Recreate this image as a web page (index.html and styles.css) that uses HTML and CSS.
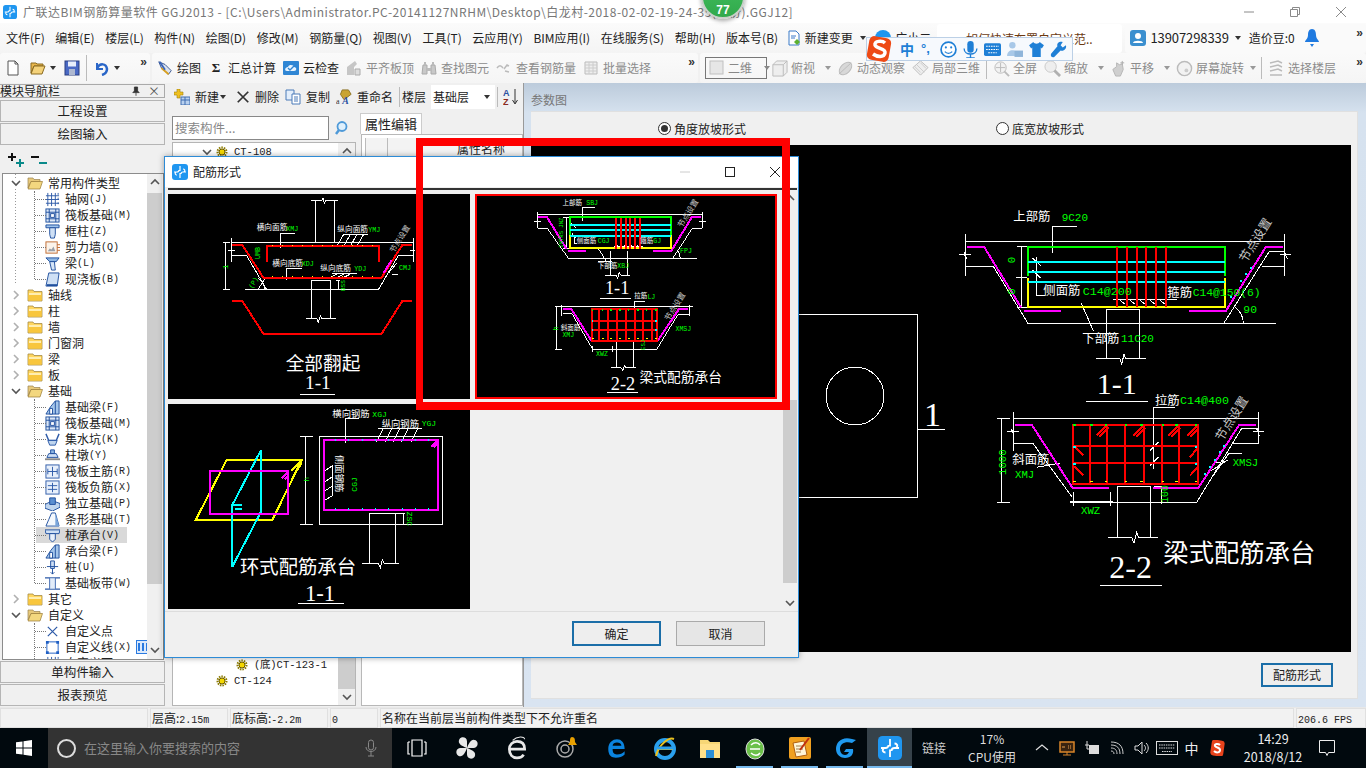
FILE: index.html
```html
<!DOCTYPE html>
<html lang="zh-CN">
<head>
<meta charset="utf-8">
<title>广联达BIM钢筋算量软件 GGJ2013</title>
<link rel="stylesheet" href="styles.css">
</head>
<body>
<svg class="defs" aria-hidden="true">
  <symbol id="fo" viewBox="0 0 16 16"><path d="M1 3h5l1 1.5h6v2H4L1 13z" fill="#e8c97a" stroke="#9a8350" stroke-width=".7"/><path d="M4 6.5h11.5L13 14H1z" fill="#f3d77f" stroke="#9a7a35" stroke-width=".7"/></symbol>
  <symbol id="fc" viewBox="0 0 16 16"><path d="M1 3h5l1 1.5h8V14H1z" fill="#ffd65e" stroke="#a58a45" stroke-width=".8"/><path d="M1.5 6h13v7.5h-13z" fill="#f8c63d"/><path d="M2 6h12v2H2z" fill="#ffeeb0"/></symbol>
  <symbol id="cd" viewBox="0 0 10 10"><path d="M1 3l4 4 4-4" fill="none" stroke="#555" stroke-width="1.6"/></symbol>
  <symbol id="cr" viewBox="0 0 10 10"><path d="M3 1l4 4-4 4" fill="none" stroke="#b0b0b0" stroke-width="1.6"/></symbol>
  <symbol id="grid" viewBox="0 0 16 16"><path d="M3 1v14M7 1v14M11 1v14M1 4h14M1 8h14M1 12h14" stroke="#2d5aa8" fill="none"/><path d="M14 1v2M14 6v2M14 11v2" stroke="#2d5aa8"/></symbol>
  <symbol id="raft" viewBox="0 0 16 16"><rect x="1" y="1" width="14" height="14" fill="#dbe7f7" stroke="#1f4f9e"/><path d="M1 4.5h14M1 11.500h14M4.500 1v14M11.500 1v14" stroke="#1f4f9e" fill="none"/><rect x="6" y="6" width="4" height="4" fill="#fff" stroke="#1f4f9e"/></symbol>
  <symbol id="col" viewBox="0 0 16 16"><path d="M1 1h14v3H1z" fill="#9fc4ec" stroke="#1f4f9e"/><path d="M5 4h6v7l-1 4H6l-1-4z" fill="#cfe0f5" stroke="#1f4f9e"/></symbol>
  <symbol id="wall" viewBox="0 0 16 16"><rect x="1" y="2" width="12" height="12" fill="#fbf3ea" stroke="#c06a30"/><path d="M3 12l2-3 2 1 2-3 2 5z" fill="#9aa0a8"/><path d="M13 5h3M13 8h3M13 11h3" stroke="#c06a30"/></symbol>
  <symbol id="lbeam" viewBox="0 0 16 16"><path d="M1 2h14l-3 4H5z" fill="#8fb7e3" stroke="#1f4f9e"/><path d="M5 6h5l1 9H7z" fill="#d5e5f7" stroke="#1f4f9e"/></symbol>
  <symbol id="slab" viewBox="0 0 16 16"><path d="M4 1h11l-2 14H1z" fill="#cfe0f5" stroke="#1f4f9e"/><path d="M2 14h11" stroke="#1f4f9e" stroke-width="2"/></symbol>
  <symbol id="fbeam" viewBox="0 0 16 16"><path d="M1 15l5-8 5-6h4v14z" fill="#a4c5ea" stroke="#1f4f9e"/><path d="M5 15V9h3v6z" fill="#fff" stroke="#1f4f9e"/><path d="M11 1v14" stroke="#1f4f9e"/></symbol>
  <symbol id="pit" viewBox="0 0 16 16"><path d="M1 2l3 7h8l3-7" fill="none" stroke="#2d5aa8" stroke-width="1.5"/><path d="M3 9h10l-2 5H5z" fill="#bfd5ee" stroke="#2d5aa8"/></symbol>
  <symbol id="pier" viewBox="0 0 16 16"><path d="M6 2h4v4H6z" fill="#8fb7e3" stroke="#1f4f9e"/><path d="M4 6h8l2 4H2z" fill="#cfe0f5" stroke="#1f4f9e"/><path d="M0 12h16" stroke="#8a8a8a" stroke-width="2"/></symbol>
  <symbol id="zmain" viewBox="0 0 16 16"><rect x="1" y="1" width="14" height="14" fill="#e8f0fb" stroke="#2d5aa8"/><path d="M8 3v10M3 8h10M3 5v6M13 5v6" stroke="#2d5aa8" fill="none"/></symbol>
  <symbol id="zneg" viewBox="0 0 16 16"><rect x="1" y="1" width="14" height="14" fill="#e8f0fb" stroke="#2d5aa8"/><path d="M8 3v10M3 6h10M3 10h10" stroke="#2d5aa8" fill="none"/></symbol>
  <symbol id="iso" viewBox="0 0 16 16"><path d="M0 9l8-4 8 3v4l-8 4-8-3z" fill="#bfd5ee" stroke="#1f4f9e"/><path d="M5 2h6v7H5z" fill="#5b8fd0" stroke="#1f4f9e"/></symbol>
  <symbol id="strip" viewBox="0 0 16 16"><path d="M1 15l3-7 3-7h4l2 7 2 7z" fill="#f4f8fd" stroke="#1f4f9e"/><path d="M11 1l2 7 2 7h-4z" fill="#7aa5da"/></symbol>
  <symbol id="cap" viewBox="0 0 16 16"><path d="M0 2h16l-1 4H1z" fill="#cfe0f5" stroke="#1f4f9e"/><path d="M5 6h6v6l-3 3-3-3z" fill="#e8f0fb" stroke="#1f4f9e"/></symbol>
  <symbol id="pile" viewBox="0 0 16 16"><path d="M6 1h4v8H6z" fill="#cfe0f5" stroke="#1f4f9e"/><path d="M2 7h12M8 9v6l-2-2M8 15l2-2" stroke="#1f4f9e" fill="none"/></symbol>
  <symbol id="band" viewBox="0 0 16 16"><path d="M0 2h16M0 14h16M5 2v12M11 2v12" stroke="#2d5aa8" fill="none" stroke-width="1.2"/><path d="M5 2h6v12H5z" fill="#cfe0f5" opacity=".6"/></symbol>
  <symbol id="pt" viewBox="0 0 16 16"><path d="M3 3l10 10M13 3L3 13" stroke="#2d5aa8" stroke-width="1.3"/></symbol>
  <symbol id="lin" viewBox="0 0 16 16"><rect x="2" y="2" width="12" height="12" fill="none" stroke="#1f5fc4"/><path d="M1 1h3v3H1zM12 1h3v3h-3zM1 12h3v3H1zM12 12h3v3h-3z" fill="#1f5fc4"/></symbol>
  <symbol id="gear" viewBox="0 0 12 12"><circle cx="6" cy="6" r="4.500" fill="none" stroke="#8a7a00" stroke-width="2" stroke-dasharray="1.500 1"/><circle cx="6" cy="6" r="3" fill="#f5d800" stroke="#6a5a00"/></symbol>
  <symbol id="new" viewBox="0 0 16 16"><path d="M3 1h7l3 3v11H3z" fill="#fff" stroke="#555"/><path d="M10 1v3h3" fill="none" stroke="#555"/></symbol>
  <symbol id="open" viewBox="0 0 16 16"><path d="M1 3h5l1 1h6v2H4L1 13z" fill="#e8b64c" stroke="#8a6a20"/><path d="M4 6h11l-3 8H1z" fill="#f4d27a" stroke="#8a6a20"/></symbol>
  <symbol id="save" viewBox="0 0 16 16"><rect x="1" y="1" width="14" height="14" fill="#4a69c4" stroke="#2a3f80"/><rect x="4" y="1.500" width="8" height="5" fill="#e8eefb"/><rect x="5" y="9" width="6" height="6" fill="#aeb8d0"/></symbol>
  <symbol id="undo" viewBox="0 0 16 16"><path d="M3 3v6h6" fill="none" stroke="#2a66c8" stroke-width="2"/><path d="M3 8c3-5 9-5 10 1 0 3-2 5-5 6" fill="none" stroke="#2a66c8" stroke-width="2.500"/></symbol>
  <symbol id="draw" viewBox="0 0 18 18"><path d="M2 2l7 3 7 7-3 4-8-7z" fill="#dbe3f0" stroke="#2b4a88"/><path d="M5 9l8 7" stroke="#d8a020" stroke-width="2"/><path d="M3 2l6 9" stroke="#3a64b8" stroke-width="2"/></symbol>
  <symbol id="cloud" viewBox="0 0 16 16"><rect x="0" y="1" width="16" height="14" rx="1" fill="#2f86d4"/><path d="M4 11c-3 0-2-4 1-4 1-3 6-2 6 0 3 0 3 4 0 4z" fill="#e8f4ff"/><path d="M5 8l2 2 4-4" stroke="#2f86d4" fill="none" stroke-width="1.400"/></symbol>
  <symbol id="g1" viewBox="0 0 16 16"><path d="M1 15V7l8-6 2 3-3 3v8z" fill="#c6c6c6"/><path d="M9 9h5v6H9z" fill="#ddd" stroke="#aaa"/></symbol>
  <symbol id="g2" viewBox="0 0 16 16"><path d="M2 5h4v9H1zM10 5h4l1 9h-5z" fill="#c8c8c8" stroke="#aaa"/><path d="M6 8h4v3H6zM3 2h2v3H3zM11 2h2v3h-2z" fill="#bbb"/></symbol>
  <symbol id="g3" viewBox="0 0 16 16"><path d="M1 8c2-3 4-3 6 0M8 9l3-4 2 1M9 11l4 1" fill="none" stroke="#bbb" stroke-width="1.500"/></symbol>
  <symbol id="g4" viewBox="0 0 16 16"><path d="M2 2h12v12H2z" fill="#eee" stroke="#bbb"/><path d="M2 5h12M2 8h12M2 11h12M6 2v12M10 2v12" stroke="#ccc"/></symbol>
  <symbol id="g5" viewBox="0 0 16 16"><rect x="1" y="1" width="13" height="13" fill="#e6e6e6" stroke="#c0c0c0"/></symbol>
  <symbol id="g6" viewBox="0 0 18 18"><path d="M2 5l4-4h11v12l-4 4H2zM2 5h11v12M13 5l4-4" fill="#eee" stroke="#bbb"/></symbol>
  <symbol id="g7" viewBox="0 0 18 18"><ellipse cx="9" cy="9" rx="5" ry="8" transform="rotate(45 9 9)" fill="#d8d8d8" stroke="#bbb"/><path d="M2 15L15 3" stroke="#bbb"/></symbol>
  <symbol id="g8" viewBox="0 0 18 18"><path d="M9 1l8 7-8 8-8-8z" fill="#eee" stroke="#bbb"/><path d="M5 5l8 8M9 3l6 6M3 7l6 6" stroke="#ccc"/></symbol>
  <symbol id="g9" viewBox="0 0 18 18"><circle cx="8" cy="8" r="6" fill="#f2f2f2" stroke="#bbb"/><path d="M8 3v10M3 8h10" stroke="#bbb"/><path d="M12 12l5 5" stroke="#bbb" stroke-width="2"/></symbol>
  <symbol id="g10" viewBox="0 0 18 18"><circle cx="7" cy="7" r="6" fill="#eee" stroke="#c8c8c8"/><path d="M11 11l6 6" stroke="#b0b0b0" stroke-width="3"/></symbol>
  <symbol id="g11" viewBox="0 0 18 18"><path d="M6 17l-3-7 4-3V3l3 2 3-1 1 6-3 7z" fill="#cfcfcf" stroke="#b5b5b5"/><path d="M13 1v4M11 3h4" stroke="#aaa"/></symbol>
  <symbol id="g12" viewBox="0 0 18 18"><circle cx="9" cy="9" r="7.500" fill="#f2f2f2" stroke="#bbb" stroke-width="1.500"/><circle cx="11" cy="11" r="2" fill="#ccc"/><path d="M3 13l3 3" stroke="#bbb"/></symbol>
  <symbol id="g13" viewBox="0 0 16 16"><path d="M2 3l8-2 4 2M2 7l8-2 4 2M2 11l8-2 4 2M2 15h12" fill="none" stroke="#bbb" stroke-width="1.400"/></symbol>
  <symbol id="nw" viewBox="0 0 16 16"><rect x="7" y="8" width="9" height="8" fill="#b8d0ee" stroke="#3f6db0"/><path d="M7 11h9M11 8v8" stroke="#3f6db0"/><path d="M3 0h3v3h3v3H6v3H3V6H0V3h3z" fill="#f0c020" stroke="#a08010" stroke-width=".6"/></symbol>
  <symbol id="del" viewBox="0 0 16 16"><path d="M2 2l12 12M14 2L2 14" stroke="#333" stroke-width="2"/></symbol>
  <symbol id="cp" viewBox="0 0 16 16"><path d="M1 1h8v10H1z" fill="#e3eefb" stroke="#4a7ab8"/><path d="M7 5h8v10H7z" fill="#fff" stroke="#4a7ab8"/><path d="M9 8h4M9 10h4M9 12h4" stroke="#4a7ab8"/></symbol>
  <symbol id="rn" viewBox="0 0 18 18"><path d="M7 1h7l3 5-8 6-4-6z" fill="#c9a432" stroke="#8a7020"/><text x="0" y="17" class="rn-a">a</text><text x="7" y="17" class="rn-b">A</text></symbol>
  <symbol id="sr" viewBox="0 0 16 16"><circle cx="8" cy="6.500" r="4.500" fill="#dff0fc" stroke="#4f9ad8" stroke-width="1.800"/><path d="M5 10l-3 4" stroke="#4f9ad8" stroke-width="2.500"/></symbol>
  <symbol id="lg" viewBox="0 0 16 16"><rect width="16" height="16" rx="3" fill="#1f96f0"/><path d="M8 2v5M8 9v5M2 8h3c1 0 2-.5 2-2M14 8h-3c-1 0-2 .5-2 2M4 8c-2 2 0 3 1 3M12 8c2-2 0-3-1-3" stroke="#fff" stroke-width="1.200" fill="none"/></symbol>
</svg>

<div class="screen">
  <header class="title">
    <svg class="t-ico"><use href="#lg"/></svg>
    <span class="t-text">广联达BIM钢筋算量软件 GGJ2013 - [C:\Users\Administrator.PC-20141127NRHM\Desktop\白龙村-2018-02-02-19-24-35(备份).GGJ12]</span>
    <div class="winbtns">
      <svg class="wb" viewBox="0 0 12 12"><path d="M1 6h10" stroke="#8a8a8a"/></svg>
      <svg class="wb" viewBox="0 0 12 12"><path d="M1.500 3.500h7v7h-7zM3.500 3.500v-2h7v7h-2" fill="none" stroke="#8a8a8a"/></svg>
      <svg class="wb" viewBox="0 0 12 12"><path d="M1 1l10 10M11 1L1 11" stroke="#8a8a8a"/></svg>
    </div>
  </header>

  <nav class="menu">
    <span>文件(F)</span><span>编辑(E)</span><span>楼层(L)</span><span>构件(N)</span><span>绘图(D)</span><span>修改(M)</span><span>钢筋量(Q)</span><span>视图(V)</span><span>工具(T)</span><span>云应用(Y)</span><span>BIM应用(I)</span><span>在线服务(S)</span><span>帮助(H)</span><span>版本号(B)</span>
    <span class="m-chg"><svg class="ic16" viewBox="0 0 16 16"><path d="M3 1h7l3 3v11H3z" fill="#fff" stroke="#3a7ac8"/><path d="M5 6h5M5 8h4" stroke="#3a7ac8"/><path d="M11 9l3 3-3 3-3-3z" fill="#5cb030"/></svg>新建变更<i class="dd"></i></span>
    <span class="m-xiao"><svg class="ic16" viewBox="0 0 16 16"><circle cx="8" cy="8" r="8" fill="#1f96f0"/></svg>广小二</span>
    <span class="m-news">如何快速布置自定义范..</span>
    <span class="m-acct">
      <svg class="ic16" viewBox="0 0 16 16"><rect width="16" height="16" rx="3" fill="#3b8fcf"/><circle cx="8" cy="6" r="3" fill="#fff"/><path d="M3 13c0-3 10-3 10 0z" fill="#fff"/></svg>
      <span class="num">13907298339</span><i class="dd"></i><span class="bean">造价豆:0</span>
      <svg class="bell" viewBox="0 0 14 18"><path d="M7 0c3 0 4 3 4 6 0 4 3 5 3 7H0c0-2 3-3 3-7 0-3 1-6 4-6zM5 15h4l-2 3z" fill="#1f7ae0"/></svg>
      <span class="more">»</span>
    </span>
  </nav>

  <div class="tools">
    <div class="seg seg1">
      <svg class="ic16"><use href="#new"/></svg>
      <svg class="ic16 ml5"><use href="#open"/></svg><i class="dd"></i>
      <svg class="ic16 ml4"><use href="#save"/></svg>
      <i class="vsep"></i>
      <svg class="ic16"><use href="#undo"/></svg><i class="dd"></i>
      <span class="more auto">»</span>
    </div>
    <div class="seg seg2">
      <span class="tb"><svg class="ic16"><use href="#draw"/></svg>绘图</span>
      <span class="tb"><b class="sig">Σ</b>汇总计算</span>
      <span class="tb"><svg class="ic16"><use href="#cloud"/></svg>云检查</span>
      <span class="tb off"><svg class="ic16"><use href="#g1"/></svg>平齐板顶</span>
      <span class="tb off"><svg class="ic16"><use href="#g2"/></svg>查找图元</span>
      <span class="tb off"><svg class="ic16"><use href="#g3"/></svg>查看钢筋量</span>
      <span class="tb off"><svg class="ic16"><use href="#g4"/></svg>批量选择</span>
      <span class="more auto">»</span>
    </div>
    <div class="seg seg3">
      <span class="combo"><svg class="ic16"><use href="#g5"/></svg>二维<i class="dd"></i></span>
      <span class="tb off t3"><svg class="ic17"><use href="#g6"/></svg>俯视<i class="dd lt"></i></span>
      <span class="tb off t3"><svg class="ic17"><use href="#g7"/></svg>动态观察</span>
      <span class="tb off t3"><svg class="ic17"><use href="#g8"/></svg>局部三维</span>
      <i class="vsep2"></i>
      <span class="tb off t3"><svg class="ic17"><use href="#g9"/></svg>全屏</span>
      <span class="tb off t3"><svg class="ic17"><use href="#g10"/></svg>缩放<i class="dd lt"></i></span>
      <span class="tb off t3"><svg class="ic17"><use href="#g11"/></svg>平移<i class="dd lt"></i></span>
      <span class="tb off t3"><svg class="ic17"><use href="#g12"/></svg>屏幕旋转<i class="dd lt tight"></i></span>
      <i class="vsep2"></i>
      <span class="tb off"><svg class="ic16"><use href="#g13"/></svg>选择楼层</span>
      <span class="more auto">»</span>
    </div>
  </div>

  <main class="work">
    <aside class="nav">
      <div class="nav-h"><span>模块导航栏</span><span class="nav-x"><svg class="pin" viewBox="0 0 10 12"><path d="M3 1h4v5l2 2H1l2-2zM5 8v4" fill="#333" stroke="#333"/></svg><span>×</span></span></div>
      <div class="nav-btn">工程设置</div>
      <div class="nav-btn">绘图输入</div>
      <div class="nav-tools">
        <svg class="pm" viewBox="0 0 18 16"><path d="M1 5h8M5 1v8" stroke="#111" stroke-width="2"/><path d="M9 11h8M13 7v8" stroke="#0a8a8a" stroke-width="2"/></svg>
        <svg class="pm" viewBox="0 0 18 16"><path d="M1 5h8" stroke="#111" stroke-width="2"/><path d="M9 11h8" stroke="#0a8a8a" stroke-width="2"/></svg>
      </div>
      <div class="tree">
        <div class="tree-list">
          <div class="r0"><svg class="ch"><use href="#cd"/></svg><svg class="fd"><use href="#fo"/></svg>常用构件类型</div>
          <div class="kids">
            <div class="r1"><svg class="ti"><use href="#grid"/></svg>轴网<span class="k">(J)</span></div>
            <div class="r1"><svg class="ti"><use href="#raft"/></svg>筏板基础<span class="k">(M)</span></div>
            <div class="r1"><svg class="ti"><use href="#col"/></svg>框柱<span class="k">(Z)</span></div>
            <div class="r1"><svg class="ti"><use href="#wall"/></svg>剪力墙<span class="k">(Q)</span></div>
            <div class="r1"><svg class="ti"><use href="#lbeam"/></svg>梁<span class="k">(L)</span></div>
            <div class="r1"><svg class="ti"><use href="#slab"/></svg>现浇板<span class="k">(B)</span></div>
          </div>
          <div class="r0"><svg class="ch"><use href="#cr"/></svg><svg class="fd"><use href="#fc"/></svg>轴线</div>
          <div class="r0"><svg class="ch"><use href="#cr"/></svg><svg class="fd"><use href="#fc"/></svg>柱</div>
          <div class="r0"><svg class="ch"><use href="#cr"/></svg><svg class="fd"><use href="#fc"/></svg>墙</div>
          <div class="r0"><svg class="ch"><use href="#cr"/></svg><svg class="fd"><use href="#fc"/></svg>门窗洞</div>
          <div class="r0"><svg class="ch"><use href="#cr"/></svg><svg class="fd"><use href="#fc"/></svg>梁</div>
          <div class="r0"><svg class="ch"><use href="#cr"/></svg><svg class="fd"><use href="#fc"/></svg>板</div>
          <div class="r0"><svg class="ch"><use href="#cd"/></svg><svg class="fd"><use href="#fo"/></svg>基础</div>
          <div class="kids">
            <div class="r1"><svg class="ti"><use href="#fbeam"/></svg>基础梁<span class="k">(F)</span></div>
            <div class="r1"><svg class="ti"><use href="#raft"/></svg>筏板基础<span class="k">(M)</span></div>
            <div class="r1"><svg class="ti"><use href="#pit"/></svg>集水坑<span class="k">(K)</span></div>
            <div class="r1"><svg class="ti"><use href="#pier"/></svg>柱墩<span class="k">(Y)</span></div>
            <div class="r1"><svg class="ti"><use href="#zmain"/></svg>筏板主筋<span class="k">(R)</span></div>
            <div class="r1"><svg class="ti"><use href="#zneg"/></svg>筏板负筋<span class="k">(X)</span></div>
            <div class="r1"><svg class="ti"><use href="#iso"/></svg>独立基础<span class="k">(P)</span></div>
            <div class="r1"><svg class="ti"><use href="#strip"/></svg>条形基础<span class="k">(T)</span></div>
            <div class="r1 hi"><svg class="ti"><use href="#cap"/></svg>桩承台<span class="k">(V)</span></div>
            <div class="r1"><svg class="ti"><use href="#fbeam"/></svg>承台梁<span class="k">(F)</span></div>
            <div class="r1"><svg class="ti"><use href="#pile"/></svg>桩<span class="k">(U)</span></div>
            <div class="r1"><svg class="ti"><use href="#band"/></svg>基础板带<span class="k">(W)</span></div>
          </div>
          <div class="r0"><svg class="ch"><use href="#cr"/></svg><svg class="fd"><use href="#fc"/></svg>其它</div>
          <div class="r0"><svg class="ch"><use href="#cd"/></svg><svg class="fd"><use href="#fo"/></svg>自定义</div>
          <div class="kids">
            <div class="r1"><svg class="ti"><use href="#pt"/></svg>自定义点</div>
            <div class="r1"><svg class="ti"><use href="#lin"/></svg>自定义线<span class="k">(X)</span><svg class="mini" viewBox="0 0 14 14"><rect x=".5" y=".5" width="13" height="13" fill="#dbe9fb" stroke="#2a7ae0"/><path d="M3 3v8M7 3v8M11 3v8" stroke="#2a7ae0" stroke-width="2"/></svg></div>
            <div class="r1"><svg class="ti"><use href="#grid"/></svg>自定义面</div>
          </div>
        </div>
        <div class="vs vs-nav"><svg class="ua" viewBox="0 0 10 10"><path d="M1 7l4-4 4 4" fill="none" stroke="#555" stroke-width="1.600"/></svg><i class="vs-thumb"></i><svg class="ua" viewBox="0 0 10 10"><path d="M1 3l4 4 4-4" fill="none" stroke="#555" stroke-width="1.600"/></svg></div>
      </div>
      <div class="nav-btn b2">单构件输入</div>
      <div class="nav-btn b2">报表预览</div>
    </aside>

    <section class="mid">
      <div class="mid-tb">
        <svg class="ic16"><use href="#nw"/></svg><span class="mt">新建</span><i class="dd"></i>
        <svg class="ic14"><use href="#del"/></svg><span class="mt">删除</span>
        <svg class="ic16 gp"><use href="#cp"/></svg><span class="mt">复制</span>
        <svg class="ic16 gp"><use href="#rn"/></svg><span class="mt">重命名</span>
        <i class="vsep3"></i><span>楼层</span>
        <span class="sel-floor"><span>基础层</span><i class="dd"></i></span>
        <i class="vsep3"></i>
        <svg class="az" viewBox="0 0 16 18"><text x="0" y="8" class="az-a">A</text><text x="0" y="17" class="az-z">Z</text><path d="M12 1v14M9.500 12l2.500 4 2.500-4" fill="none" stroke="#333"/></svg>
      </div>
      <div class="mid-body">
        <div class="mid-left">
          <div class="search"><span class="search-in">搜索构件...</span><svg class="ic16 sr"><use href="#sr"/></svg></div>
          <div class="list">
            <div class="list-rows">
              <div class="li first"><svg class="ch"><use href="#cd"/></svg><svg class="gr"><use href="#gear"/></svg>CT-108</div>
              <div class="grow"></div>
              <div class="li deep"><svg class="gr"><use href="#gear"/></svg>(底)CT-123-1</div>
              <div class="li shal"><svg class="gr"><use href="#gear"/></svg>CT-124</div>
              <div class="li blank"></div>
            </div>
            <div class="vs vs-list"><svg class="ua" viewBox="0 0 10 10"><path d="M1 7l4-4 4 4" fill="none" stroke="#555" stroke-width="1.600"/></svg><i class="vs-thumb"></i><svg class="ua" viewBox="0 0 10 10"><path d="M1 3l4 4 4-4" fill="none" stroke="#555" stroke-width="1.600"/></svg></div>
          </div>
        </div>
        <div class="mid-right">
          <div class="tab">属性编辑</div>
          <div class="prop"><div class="prop-h"><i class="ph1"></i><i class="ph2"></i><span class="ph3">属性名称</span></div></div>
        </div>
      </div>
    </section>

    <section class="param">
      <div class="param-h">参数图</div>
      <div class="param-p">
        <div class="radios">
          <span class="radio on"><i class="dot"></i>角度放坡形式</span>
          <span class="radio"><i class="dot"></i>底宽放坡形式</span>
        </div>
        <svg class="canvas" viewBox="531 146 820 507">
          <path class="ln w" d="M799 315H917V498H799M917 430H945"/>
          <circle class="ln w" cx="855" cy="397" r="29"/>
          <text x="924" y="427" class="f-s big1">1</text>
          <g transform="translate(950 195) scale(.33333)">
            <path class="ln w" d="M46 142H1005M46 120V245M1005 120V245M28 183H48L42 175 50 195 44 183H64M990 183H1010L1004 175 1012 195 1006 183H1022M46 217H130L235 390H977M820 390L958 172H1005M935 217H1005M215 158V340M200 158H232M198 250H232M200 340H232M307 178V97H380M247 192L272 215M247 228L272 252M260 190V305H285M490 318H680M505 315L525 330M535 315L555 330M565 315L585 330M595 315L615 330M625 315L645 330M393 326L430 410M400 420H505M469 495V347H568V495M438 495H510L515 512 522 480 527 495H587M880 390A60 60 0 0 0 855 340"/>
            <path class="ln m" d="M52 158H102L213 340M222 350H332M718 350H828L948 158H1000"/>
            <path class="ln gr1" d="M234 245V158H825V245"/>
            <path class="ln y" d="M234 252V339H825V252"/>
            <path class="ln c" d="M234 203H825M234 233H825M234 264H825"/>
            <path class="ln r" d="M500 158V339M530 158V339M560 158V339M587 158V339M618 158V339M648 158V339"/>
            <path class="ln cd" d="M840 310h6M870 262h6M885 240h6M899 222h6"/>
            <text x="190" y="82" class="cn" font-size="37">上部筋</text><text x="335" y="80" class="lt-g" font-size="33">9C20</text>
            <text x="280" y="302" class="cn" font-size="37">侧面筋</text><text x="398" y="302" class="lt-g" font-size="35">C14@200</text>
            <text x="652" y="308" class="cn" font-size="37">箍筋</text><text x="728" y="306" class="lt-g" font-size="34">C14@150(6)</text>
            <text x="397" y="447" class="cn" font-size="37">下部筋</text><text x="513" y="445" class="lt-g" font-size="33">11C20</text>
            <text x="880" y="358" class="lt-g" font-size="34">90</text>
            <text x="196" y="208" class="lt-g" font-size="32" transform="rotate(-90 196 208)">0</text>
            <text x="196" y="302" class="lt-g" font-size="32" transform="rotate(-90 196 302)">0</text>
            <text x="888" y="208" class="cn gy" font-size="37" transform="rotate(-58 888 208)">节点设置</text>
            <text x="440" y="600" class="f-s" font-size="90">1-1</text>
            <path class="ln w" d="M408 622H594"/>
          </g>
          <g transform="translate(980 390) scale(.33333)">
            <path class="ln w" d="M100 90H835M100 70V185M835 70V165M52 90H90M65 90V340M52 340H90M82 128H100L94 120 102 140 98 128H118M818 128H836L830 120 838 140 834 128H852M100 165H160L277 325M270 340H650L785 118H835M760 165H835M522 55H585M522 55V240M510 185L535 160M510 230L535 205M170 235L240 222M412 445V292H512V445M385 445H455L462 462 470 430 475 445H535M545 297V345M522 292H545M700 260L745 195H785M694 245L740 215M705 222L745 215M280 310V350M393 310V350M270 338H398"/>
            <path class="ln m" d="M105 107H155L278 297H388M520 297H655L778 107H828"/>
            <path class="ln r2" d="M278 107H655V285H278ZM330 107V285M382 107V285M435 107V285M492 107V285M545 107V285M598 107V285M278 170H655M278 222H655M350 140L380 110M358 143L386 115M460 140L490 110M468 143L496 115M565 140L595 110M573 143L601 115M622 140L652 110M630 143L655 118M282 232L310 260M282 172L310 200M630 205L652 178M630 260L652 235"/>
            <path class="ln gd" d="M280 109h7M331 109h7M374 109h7M435 109h7M481 109h7M546 109h7M586 109h7M644 109h7"/>
            <path class="ln yd" d="M280 277h7M331 277h7M374 277h7M435 277h7M481 277h7M546 277h7M586 277h7M644 277h7"/>
            <path class="ln cd" d="M280 175h7M644 175h7M280 226h7M644 226h7M730 170h6M716 190h6M702 212h6M688 235h6M673 256h6"/>
            <text x="525" y="48" class="cn" font-size="37">拉筋</text><text x="600" y="46" class="lt-g" font-size="35">C14@400</text>
            <text x="97" y="225" class="cn" font-size="37">斜面筋</text><text x="105" y="268" class="lt-g" font-size="32">XMJ</text>
            <text x="303" y="375" class="lt-g" font-size="32">XWZ</text><text x="758" y="232" class="lt-g" font-size="32">XMSJ</text>
            <text x="77" y="258" class="lt-g" font-size="32" transform="rotate(-90 77 258)">1000</text>
            <text x="563" y="342" class="lt-g" font-size="30" transform="rotate(-90 563 342)">100</text>
            <text x="727" y="158" class="cn gy" font-size="37" transform="rotate(-58 727 158)">节点设置</text>
            <text x="550" y="520" class="cn" font-size="76">梁式配筋承台</text>
            <text x="388" y="568" class="f-s" font-size="96">2-2</text>
            <path class="ln w" d="M360 590H546"/>
          </g>
        </svg>
        <div class="param-f"><span class="blue-btn">配筋形式</span></div>
      </div>
    </section>
  </main>

  <footer class="status">
    <span class="st s1"></span>
    <span class="st s2">层高:<span class="k2">2.15m</span></span>
    <span class="st s3">底标高:<span class="k2">-2.2m</span></span>
    <span class="st s4"><span class="k2">0</span></span>
    <span class="st s5">名称在当前层当前构件类型下不允许重名</span>
    <span class="st s6"><span class="k2">206.6 FPS</span></span>
  </footer>

  <footer class="taskbar">
    <div class="start"><svg class="win" viewBox="0 0 16 16"><path d="M0 2.300l6.500-.9v6.100H0zM7.500 1.300L16 0v7.500H7.500zM0 8.500h6.500v6.100L0 13.700zM7.500 8.500H16V16l-8.500-1.300z" fill="#fff"/></svg></div>
    <div class="sbox"><i class="cortana"></i><span class="sph">在这里输入你要搜索的内容</span><svg class="mic" viewBox="0 0 12 18"><rect x="3.500" y="1" width="5" height="10" rx="2.500" fill="none" stroke="#888"/><path d="M1 8c0 6 10 6 10 0M6 13v4M3 17h6" fill="none" stroke="#888"/></svg></div>
    <div class="apps">
      <span class="ap a"><svg class="ai" viewBox="0 0 20 20"><path d="M5 2h10v16H5zM1 4h2M1 4v12h2M19 4h-2M19 4v12h-2" fill="none" stroke="#fff" stroke-width="1.200"/></svg></span>
      <span class="ap a"><svg class="ai l" viewBox="0 0 22 22"><path d="M11 11C6 9 2 7 4 3c2-3 7-2 7 2zM11 11c2-5 4-9 8-7 3 2 2 7-2 7zM11 11c5 2 9 4 7 8-2 3-7 2-7-2zM11 11c-2 5-4 9-8 7-3-2-2-7 2-7z" fill="#e8e8e8"/></svg></span>
      <span class="ap a"><svg class="ai l" viewBox="0 0 22 22"><path d="M4 12h14c0-5-3-7-7-7s-7 3-7 7c0 5 3 8 7 8 3 0 5-1 6-3" fill="none" stroke="#e8e8e8" stroke-width="2.500"/><path d="M7 4c4-4 11-4 11-1" fill="none" stroke="#e8e8e8"/></svg></span>
      <span class="ap a"><svg class="ai l" viewBox="0 0 24 24"><circle cx="10" cy="13" r="8" fill="none" stroke="#aaa" stroke-width="1.500"/><circle cx="10" cy="13" r="4" fill="none" stroke="#aaa" stroke-width="1.500"/><path d="M17 1c3 0 3 3 3 5l2 3H13l2-3c0-2 0-5 2-5z" fill="#e8a000"/></svg></span>
      <span class="ap a"><svg class="ai l" viewBox="0 0 22 22"><path d="M3 12h15c0-6-3-9-7-9S3 6 3 12c0 6 3 8 7 8 3 0 6-1 8-3v-3c-2 2-4 3-7 3-3 0-4-2-4-5z" fill="#0a84e0"/><path d="M7 9c0-2 2-3 4-3s4 1 4 3z" fill="#000a0f"/></svg></span>
      <span class="ap b"><svg class="ai l" viewBox="0 0 24 24"><circle cx="12" cy="13" r="9" fill="none" stroke="#2aa0ee" stroke-width="4"/><path d="M5 13h15M3 20C6 8 16 1 21 3" fill="none" stroke="#e8c020" stroke-width="2"/><path d="M5 12h15" stroke="#2aa0ee" stroke-width="3"/></svg></span>
      <span class="ap b"><svg class="ai l" viewBox="0 0 24 24"><path d="M2 4h8l2 2h10v16H2z" fill="#f6d676"/><path d="M2 8h20v14H2z" fill="#ffe08a"/><path d="M8 14h8v8H8z" fill="#2c8ed6"/></svg></span>
      <span class="ap b run"><svg class="ai l" viewBox="0 0 24 24"><ellipse cx="12" cy="13" rx="9" ry="10" fill="#6bc04a" stroke="#ddd"/><path d="M7 13h10M8 9c3-3 7-3 9 0M8 17c3 3 7 3 9 0" stroke="#fff" fill="none" stroke-width="1.500"/></svg></span>
      <span class="ap b run"><svg class="ai l" viewBox="0 0 24 24"><rect x="1" y="1" width="22" height="22" rx="2" fill="#f0a020"/><path d="M5 7l11-2 3 14-11 2z" fill="#fff5d8" stroke="#b06010"/><path d="M8 10h7M8 13h7M8 16h5" stroke="#a08050"/><path d="M21 2L12 14" stroke="#c03010" stroke-width="2"/></svg></span>
      <span class="ap b run"><svg class="ai l" viewBox="0 0 24 24"><path d="M19 3C9 0 3 6 3 13c0 6 5 9 9 9 6 0 9-4 8-9h-7l-2 3h5c-1 2-2 3-4 3-3 0-5-3-5-6 0-5 5-8 12-6l4-3z" fill="#1f9af0"/></svg></span>
      <span class="ap b act"><svg class="ai l2" viewBox="0 0 24 24"><use href="#lg"/></svg></span>
    </div>
    <div class="tray">
      <span class="lk">链接</span>
      <span class="cpu"><span>17%</span><span>CPU使用</span></span>
      <div class="trayi">
        <span class="ti2"><svg class="t16" viewBox="0 0 16 16"><path d="M2 10l6-5 6 5" fill="none" stroke="#ddd" stroke-width="1.200"/></svg></span>
        <span class="ti2"><svg class="t16" viewBox="0 0 16 16"><rect x="1" y="2" width="14" height="10" fill="#3a2410" stroke="#d9852a" stroke-width="1.500"/><path d="M4 15h8M8 12v3" stroke="#d9852a"/><path d="M3 7h3M9 6h1M11 6h1M9 8h1M11 8h1" stroke="#e8a050"/></svg></span>
        <span class="ti2"><svg class="t16" viewBox="0 0 16 16"><path d="M5 5h10v9H5z" fill="#ddd"/><path d="M3 1v4M1 5h4M3 5v4h3" stroke="#ddd" fill="none"/></svg></span>
        <span class="ti2"><svg class="t16" viewBox="0 0 16 16"><path d="M2 14a2 2 0 010 .1M2 11c2 0 3 1 3 3M2 8c4 0 6 2 6 6M2 5c6 0 9 3 9 9M2 2c8 0 12 4 12 12" fill="none" stroke="#ccc"/></svg></span>
        <span class="ti2"><svg class="t16" viewBox="0 0 16 16"><path d="M1 6h3l4-4v12l-4-4H1z" fill="none" stroke="#ddd"/><path d="M10 5c2 2 2 4 0 6M12 3c3 3 3 7 0 10" fill="none" stroke="#ddd"/></svg></span>
        <span class="ti2"><svg class="t22" viewBox="0 0 22 16"><rect x=".5" y="1.500" width="21" height="13" fill="none" stroke="#ddd"/><path d="M3 5h16M3 8h16M6 11.500h10" stroke="#ddd" stroke-dasharray="1.500 .8"/></svg></span>
        <span class="ti2 zh">中</span>
        <span class="ti2"><svg class="t16" viewBox="0 0 16 16"><rect x="2" y="0" width="13" height="16" rx="3" fill="#e8431c" transform="rotate(8 8 8)"/><path d="M11 5c-2-2-6-1-5 1s5 1 5 4-4 3-6 1" fill="none" stroke="#fff" stroke-width="2"/></svg></span>
      </div>
      <span class="clock"><span>14:29</span><span>2018/8/12</span></span>
      <span class="notif"><svg class="t18" viewBox="0 0 18 18"><path d="M1.500 1.500h15v12h-6l-1.500 3-1.500-3h-6z" fill="none" stroke="#eee"/></svg></span>
    </div>
  </footer>

  <div class="badge"><span>77</span></div>

  <div class="sogou">
    <svg class="s-logo" viewBox="0 0 26 26"><rect x="2" y="1" width="22" height="24" rx="5" fill="#ee4a15" transform="rotate(10 13 13)"/><path d="M19 7c-3-3-11-2-10 2s11 3 10 8-8 4-12 1" fill="none" stroke="#fff" stroke-width="3.500"/></svg>
    <span class="s-zh">中</span><span class="s-p">°,</span>
    <svg class="s-i" viewBox="0 0 16 16"><circle cx="8" cy="8" r="7" fill="#fff" stroke="#1e7fd6" stroke-width="1.600"/><circle cx="5.500" cy="6" r="1" fill="#1e7fd6"/><circle cx="10.500" cy="6" r="1" fill="#1e7fd6"/><path d="M4.500 10c2 2 5 2 7 0" fill="none" stroke="#1e7fd6" stroke-width="1.300"/></svg>
    <svg class="s-i" viewBox="0 0 16 16"><rect x="5" y="0" width="6" height="11" rx="3" fill="#1e7fd6"/><path d="M2 7c0 7 12 7 12 0M8 13v3M4 16h8" fill="none" stroke="#1e7fd6" stroke-width="1.300"/></svg>
    <svg class="s-i" viewBox="0 0 16 16"><rect y="2" width="16" height="12" rx="1.500" fill="#1e7fd6"/><path d="M2 5h12M2 8h12M4 11h8" stroke="#fff" stroke-dasharray="1.500 .8"/></svg>
    <svg class="s-i" viewBox="0 0 16 16"><circle cx="6" cy="4" r="3" fill="#a8c8e8"/><path d="M1 14c0-7 10-7 10 0z" fill="#a8c8e8"/><rect x="8" y="9" width="8" height="6" fill="#8fb5da"/></svg>
    <svg class="s-i" viewBox="0 0 16 16"><path d="M5 1L1 4l2 3 1-1v9h8V6l1 1 2-3-4-3c-1 2-5 2-6 0z" fill="#1e7fd6"/></svg>
    <svg class="s-i" viewBox="0 0 16 16"><path d="M15 4l-3 2-2-2 2-3c-3-1-6 1-5 4L1 12c-1 2 1 4 3 3l6-6c3 1 6-2 5-5z" fill="#1e7fd6"/></svg>
  </div>

  <div class="dlg">
    <div class="dlg-t">
      <svg class="ic16"><use href="#lg"/></svg><span class="dlg-n">配筋形式</span>
      <span class="dlg-c">
        <svg class="db" viewBox="0 0 12 12"><path d="M1 6h10" stroke="#ccc"/></svg>
        <svg class="db" viewBox="0 0 12 12"><rect x="1.500" y="1.500" width="9" height="9" fill="none" stroke="#222"/></svg>
        <svg class="db" viewBox="0 0 12 12"><path d="M1 1l10 10M11 1L1 11" stroke="#222"/></svg>
      </span>
    </div>
    <div class="dlg-b">
      <div class="cells">
        <div class="cell">
          <svg class="th" viewBox="9 27 906 615">
            <path class="ln w" d="M451 170V46M507 170V46M437 46H470L474 38 478 54 482 46H518M200 172H745M175 172H195M182 172V314M175 314H195M200 160V230M190 196H210M200 212H245L305 314M240 314H640L700 212H745M745 160V230M734 196H750M345 190V145H390M364 285V250H410M535 148H610M515 185L535 150M535 185L555 150M555 185L575 150M575 185L595 150M495 278L520 265M515 278L540 265M535 278L560 265M500 265H575M439 400V286H497V400M423 400H455L460 412 466 392 470 400H512M520 285V315M670 265L695 235M680 268H700M280 312L300 280M512 286H525"/>
            <path class="ln w" d="M300 314A50 50 0 0 0 280 280"/>
            <path class="ln r" d="M202 180H232L295 278H650L712 180H742M305 230V182H642V230M202 348H232L295 446H650L712 348H742"/>
            <path class="ln yd" d="M320 181h3M350 181h3M380 181h3M410 181h3M440 181h3M470 181h3M500 181h3M530 181h3M560 181h3M590 181h3M620 181h3M320 274h3M350 274h3M380 274h3M410 274h3M440 274h3M470 274h3M500 274h3M530 274h3M560 274h3M590 274h3M620 274h3"/>
            <path class="ln m" d="M655 265L680 225"/>
            <text x="275" y="136" class="cn" font-size="23">横向面筋</text><text x="364" y="138" class="lt-g" font-size="20">XMJ</text>
            <text x="517" y="141" class="cn" font-size="23">纵向面筋</text><text x="610" y="140" class="lt-g" font-size="20">YMJ</text>
            <text x="322" y="242" class="cn" font-size="23">横向底筋</text><text x="410" y="242" class="lt-g" font-size="20">XDJ</text>
            <text x="466" y="258" class="cn" font-size="23">纵向底筋</text><text x="568" y="257" class="lt-g" font-size="20">YDJ</text>
            <text x="702" y="255" class="lt-g" font-size="20">CMJ</text>
            <text x="687" y="205" class="cn gy" font-size="23" transform="rotate(-58 687 205)">节点设置</text>
            <text x="262" y="312" class="lt-g" font-size="20" transform="rotate(-60 262 312)">(P)</text>
            <text x="286" y="222" class="lt-g" font-size="20" transform="rotate(-90 286 222)">UMB</text>
            <text x="188" y="252" class="lt-g" font-size="22" transform="rotate(-90 188 252)">1</text>
            <text x="540" y="318" class="lt-g" font-size="18" transform="rotate(-90 540 318)">BSS</text>
            <text x="362" y="556" class="cn" font-size="56">全部翻起</text>
            <text x="420" y="613" class="f-s" font-size="58">1-1</text>
            <path class="ln w" d="M405 628H510"/>
          </svg>
        </div>
        <div class="cell sel">
          <svg class="th" viewBox="15 27 903 615">
            <path class="ln w" d="M195 85H700M196 75V125M700 75V125M185 105H205M690 105H710M196 125H225L290 217H685M610 217L670 125H700M332 103V62H372M308 150V172H316M285 92V187M275 92H292M275 187H292M300 110L312 125M300 140L312 155M430 180H520M440 176L448 186M460 176L468 186M480 176L488 186M500 176L508 186M380 185L405 225M380 228H425M418 195V270M470 195V270M402 270H436L441 280 446 260 450 270H480M632 217A28 28 0 0 0 622 192"/>
            <path class="ln m" d="M197 92H225L285 190M290 195H345M548 195H605L668 92H697"/>
            <path class="ln gr1" d="M295 150V92H605V145"/>
            <path class="ln y" d="M295 145V187H605V145"/>
            <path class="ln c" d="M295 117H605M295 131H605M295 150H605"/>
            <path class="ln r" d="M435 94V188M450 94V188M465 94V188M480 94V188M495 94V188M510 94V188"/>
            <path class="ln w" d="M270 365H670M248 365H270M255 365V497M248 497H270M300 385L365 497H560L625 390H660M275 385H300M492 350H525M492 350V440M436 472V552M488 472V552M420 552H452L457 562 462 544 466 552H498M270 360V395M660 360V395M365 487V505M425 487V505"/>
            <path class="ln m" d="M275 374H300L362 472H425M505 472H562L628 374H655"/>
            <path class="ln r" d="M362 374H562V470H362ZM385 374V470M412 374V470M440 374V470M468 374V470M495 374V470M520 374V470M545 374V470M362 408H562M362 437H562"/>
            <path class="ln yd" d="M362 463h6M392 463h6M418 463h6M445 463h6M472 463h6M500 463h6M527 463h6M555 463h6"/>
            <path class="ln gd" d="M362 376h5M392 376h5M418 376h5M445 376h5M472 376h5M500 376h5M527 376h5M555 376h5"/>
            <path class="ln cd" d="M362 410h5M555 410h5M362 437h5M555 437h5"/>
            <text x="272" y="54" class="cn" font-size="20">上部筋</text><text x="345" y="54" class="lt-g" font-size="20">SBJ</text>
            <text x="316" y="170" class="cn" font-size="20">侧面筋</text><text x="380" y="170" class="lt-g" font-size="20">CGJ</text>
            <text x="510" y="172" class="cn" font-size="20">箍筋</text><text x="550" y="172" class="lt-g" font-size="20">GJ</text>
            <text x="380" y="246" class="cn" font-size="20">下部筋</text><text x="440" y="246" class="lt-g" font-size="20">XBJ</text>
            <text x="632" y="200" class="lt-g" font-size="20">FPJ</text>
            <text x="275" y="185" class="lt-g" font-size="17" transform="rotate(-90 275 185)">INTRS JNZ</text>
            <text x="638" y="125" class="cn gy" font-size="24" transform="rotate(-58 638 125)">节点设置</text>
            <text x="402" y="328" class="f-s" font-size="56">1-1</text>
            <path class="ln w" d="M387 340H483"/>
            <text x="492" y="340" class="cn" font-size="20">拉筋</text><text x="532" y="342" class="lt-g" font-size="20">LJ</text>
            <text x="267" y="437" class="cn" font-size="20">斜面筋</text><text x="272" y="458" class="lt-g" font-size="20">XMJ</text>
            <text x="375" y="516" class="lt-g" font-size="20">XWZ</text><text x="618" y="440" class="lt-g" font-size="20">XMSJ</text>
            <text x="525" y="498" class="lt-g" font-size="17" transform="rotate(-90 525 498)">ESJ</text>
            <text x="258" y="438" class="lt-g" font-size="20" transform="rotate(-90 258 438)">h</text>
            <text x="598" y="410" class="cn gy" font-size="24" transform="rotate(-58 598 410)">节点设置</text>
            <text x="508" y="595" class="cn" font-size="42">梁式配筋承台</text>
            <text x="420" y="620" class="f-s" font-size="56">2-2</text>
            <path class="ln w" d="M408 628H503"/>
          </svg>
        </div>
        <div class="cell">
          <svg class="th" viewBox="9 12 906 615">
            <path class="ln y" d="M185 180H410L322 360H92ZM380 212L410 180M388 222L410 190"/>
            <path class="ln c" d="M288 150V335M288 150L202 315V500L288 335M202 315H232M210 327H232"/>
            <path class="ln m" d="M135 212H370V342H135ZM350 235L368 217M358 238L368 228"/>
            <path class="ln w" d="M463 108H833V374H463ZM420 108V374M405 108H445M405 374H445M540 130V55H582M613 490V340H690V490M592 490H640L646 502 652 480 658 490H702M715 340V374M690 340H720M635 125L655 85M660 125L680 85M685 125L705 85M710 125L730 85M738 125L758 85M640 85H770M480 212L503 197M480 245L503 230M480 272L503 258M480 300L503 287M503 197V287"/>
            <path class="ln m" d="M477 120H820V330H477ZM798 140L818 120M806 142L818 130"/>
            <path class="ln cd" d="M510 120h3M550 120h3M590 120h3M630 120h3M670 120h3M710 120h3M750 120h3M790 120h3M510 327h3M550 327h3M590 327h3M630 327h3M670 327h3M710 327h3M750 327h3M790 327h3"/>
            <text x="502" y="50" class="cn" font-size="28">横向钢筋</text><text x="622" y="50" class="lt-g" font-size="24">XGJ</text>
            <text x="650" y="80" class="cn" font-size="28">纵向钢筋</text><text x="770" y="78" class="lt-g" font-size="24">YGJ</text>
            <text x="514" y="165" class="cn" font-size="28" transform="rotate(90 514 165)">侧面钢筋</text>
            <text x="577" y="275" class="lt-g" font-size="24" transform="rotate(-90 577 275)">CGJ</text>
            <text x="431" y="245" class="lt-g" font-size="24" transform="rotate(-90 431 245)">h</text>
            <text x="725" y="335" class="lt-g" font-size="24" transform="rotate(90 725 335)">ZSC</text>
            <text x="225" y="522" class="cn" font-size="58">环式配筋承台</text>
            <text x="420" y="603" class="f-s" font-size="68">1-1</text>
            <path class="ln w" d="M400 610H537"/>
          </svg>
        </div>
        <div class="cell empty"></div>
      </div>
      <div class="vs vs-dlg"><svg class="ua" viewBox="0 0 10 10"><path d="M1 7l4-4 4 4" fill="none" stroke="#555" stroke-width="1.600"/></svg><i class="vs-thumb"></i><svg class="ua" viewBox="0 0 10 10"><path d="M1 3l4 4 4-4" fill="none" stroke="#555" stroke-width="1.600"/></svg></div>
    </div>
    <div class="dlg-f"><span class="blue-btn ok">确定</span><span class="btn cancel">取消</span></div>
  </div>

  <div class="annot"></div>
</div>
</body>
</html>
```

FILE: styles.css
```css
* { box-sizing: border-box; }
html, body { margin: 0; padding: 0; }
body { width: 1366px; height: 768px; overflow: hidden; font: 12px/16px "Noto Sans CJK SC", "Liberation Sans", sans-serif; color: #222; background: #f0f0f0; }
i { font-style: normal; display: block; }
svg { display: block; flex: none; }
.defs { position: absolute; width: 0; height: 0; }
.screen { position: relative; width: 1366px; height: 768px; display: flex; flex-direction: column; overflow: hidden; }
.ic16 { width: 16px; height: 16px; }
.ic17 { width: 17px; height: 17px; }
.ic14 { width: 14px; height: 14px; }

/* title */
.title { height: 23px; background: #fff; display: flex; align-items: center; padding-left: 3px; flex: none; }
.t-ico { width: 14px; height: 14px; }
.t-text { margin-left: 6px; color: #777; white-space: nowrap; letter-spacing: .5px; }
.winbtns { margin-left: auto; display: flex; gap: 34px; padding-right: 19px; }
.wb { width: 12px; height: 12px; }

/* menu */
.menu { height: 30px; flex: none; display: flex; align-items: center; gap: 10.6px; padding-left: 6px; background: linear-gradient(#fbfbfb, #f4f4f4); white-space: nowrap; }
.dd { width: 0; height: 0; border: 3px solid transparent; border-top: 4px solid #333; border-bottom: 0; flex: none; }
.dd.lt { border-top-color: #999; margin-left: 7px; margin-right: -1px; }
.dd.tight { margin-left: 3px; }
.m-chg { display: flex; align-items: center; gap: 3px; margin-left: -3px; }
.m-chg .dd { margin-left: 4px; }
.m-xiao { display: flex; align-items: center; gap: 4px; margin-left: -1px; }
.m-news { width: 185px; height: 29px; margin-left: -5px; background: #fff; border-radius: 3px; color: #6b3a12; padding-left: 29px; line-height: 29px; }
.m-acct { display: flex; align-items: center; flex: 1; height: 29px; margin-left: -7px; background: #fafafa; padding-left: 5px; border-radius: 3px; }
.num { margin-left: 4px; font-size: 13px; letter-spacing: -.1px; }
.m-acct .dd { margin-left: 6px; }
.bean { margin-left: 8px; }
.bell { width: 14px; height: 18px; margin-left: 10px; }
.more { font: bold 12px/10px "Liberation Sans", sans-serif; color: #333; align-self: flex-start; margin-top: 4px; }
.m-acct .more { margin-left: auto; margin-right: 3px; }
.auto { margin-left: auto; margin-right: 3px; }

/* toolbar */
.tools { height: 30px; flex: none; display: flex; gap: 2px; background: #f1f1f1; }
.seg { display: flex; align-items: center; background: linear-gradient(#fafafa, #f5f5f5); border-radius: 3px; white-space: nowrap; }
.seg1 { width: 150px; flex: none; padding-left: 5px; gap: 4px; }
.seg2 { width: 546px; flex: none; padding-left: 5px; gap: 7px; }
.seg3 { flex: 1; min-width: 0; padding-left: 5px; gap: 7px; }
.ml5 { margin-left: 5px; }
.ml4 { margin-left: 4px; }
.vsep { width: 1px; height: 26px; background: #bbb; margin: 0 3px 0 2px; }
.vsep2 { width: 1px; height: 22px; background: #bbb; margin: 0 -1px; }
.tb { display: flex; align-items: center; gap: 4px; flex: none; }
.t3 { gap: 3px; }
.off { color: #8c8c8c; }
.sig { width: 16px; text-align: center; font: bold 13px "Liberation Serif", serif; }
.combo { display: flex; align-items: center; gap: 3px; width: 62px; height: 22px; border: 1px solid #777; padding-left: 3px; color: #888; margin-right: -3px; flex: none; }
.combo .dd { margin-left: 9px; border-top-color: #888; }

/* workspace */
.work { flex: 1; min-height: 0; display: flex; background: #f0f0f0; }
.nav { width: 165px; flex: none; padding-top: 1px; display: flex; flex-direction: column; }
.nav-h { height: 14px; margin-bottom: 2px; display: flex; justify-content: space-between; align-items: center; border: 1px solid #aaa; border-left: 0; line-height: 12px; overflow: hidden; white-space: nowrap; }
.nav-x { display: flex; gap: 8px; align-items: center; padding-right: 4px; color: #555; }
.pin { width: 8px; height: 10px; }
.nav-btn { height: 22px; margin-bottom: 1px; border: 1px solid #b5b5b5; background: #f0f0f0; text-align: center; line-height: 20px; font-size: 12.500px; }
.nav-tools { height: 27px; display: flex; align-items: center; gap: 5px; padding-left: 7px; flex: none; }
.pm { width: 18px; height: 16px; }
.tree { flex: 1; min-height: 0; margin: 0 1px 1px 2px; border: 1px solid #8c8c8c; background: #fff; display: flex; overflow: hidden; position: relative; }
.tree-list { flex: 1; min-width: 0; padding-top: 1px; overflow: hidden; white-space: nowrap; background: repeating-linear-gradient(#999 0 1px, transparent 1px 3px) 12px 0 / 1px 110px no-repeat; }
.r0 { height: 16px; display: flex; align-items: center; padding-left: 8px; }
.r0 .ch { width: 10px; height: 10px; background: #fff; }
.fd { width: 16px; height: 16px; margin: 0 5px 0 6px; }
.kids { margin-left: 31px; border-left: 1px dotted #777; position: relative; }
.kids::after { content: ""; position: absolute; left: -1px; bottom: 0; height: 8px; width: 1px; background: #fff; }
.r1 { height: 16px; display: flex; align-items: center; padding-left: 10px; width: 92px; position: relative; }
.r1::before { content: ""; position: absolute; left: 0; top: 8px; width: 11px; border-top: 1px dotted #777; }
.ti { width: 15px; height: 15px; margin-right: 5px; }
.k { font: 10px/16px "Liberation Mono", monospace; padding-top: 2px; }
.k2 { font: 10px/16px "Liberation Mono", monospace; }
.hi { background: linear-gradient(90deg, transparent 0 1px, #d9d9d9 1px); }
.mini { width: 14px; height: 14px; margin-left: 5px; }
.vs { background: #f0f0f0; display: flex; flex-direction: column; align-items: center; flex: none; }
.ua { width: 10px; height: 10px; flex: none; margin: 3px 0; }
.vs-thumb { flex: 1; width: 100%; }
.vs-nav { width: 15px; margin-right: 1px; }
.vs-nav .vs-thumb { background: linear-gradient(#cdcdcd 0 87%, #f0f0f0 87%); }
.vs-nav .ua:first-child { margin-bottom: 6px; }
.vs-nav .ua:last-child { margin-bottom: 4px; }

.mid { width: 360px; flex: none; display: flex; flex-direction: column; padding-top: 1px; }
.mid-tb { height: 26px; display: flex; align-items: center; padding-left: 9px; flex: none; white-space: nowrap; }
.mt { margin-left: 5px; }
.mid-tb .dd { margin: 0 10px 0 1px; }
.gp { margin-left: 6px; }
.vsep3 { width: 1px; height: 20px; background: #bbb; margin: 0 2px 0 6px; }
.sel-floor { display: flex; align-items: center; width: 64px; height: 24px; margin: 0 -4px 0 5px; background: #fff; padding-left: 2px; }
.mid-tb .sel-floor .dd { margin: 0 5px 0 auto; }
.az { width: 16px; height: 18px; margin-left: 3px; }
.mid-body { flex: 1; min-height: 0; display: flex; gap: 5px; padding: 0 2px 1px 7px; }
.mid-left { width: 184px; flex: none; display: flex; flex-direction: column; }
.search { height: 24px; margin-top: 6px; display: flex; align-items: center; }
.search-in { width: 157px; height: 24px; border: 1px solid #888; background: #fff; color: #888; padding-left: 2px; line-height: 22px; font-size: 12.500px; }
.sr { margin-left: 5px; }
.list { flex: 1; min-height: 0; margin-top: 2px; border: 1px solid #b5b5b5; background: #fff; display: flex; }
.list-rows { flex: 1; display: flex; flex-direction: column; min-width: 0; }
.li { height: 16px; display: flex; align-items: center; font: 10.500px/16px "Liberation Mono", monospace; flex: none; white-space: nowrap; }
.li .ch { width: 10px; height: 10px; margin-right: 4px; }
.first { padding: 0 0 0 29px; margin-top: 1px; }
.deep { padding-left: 63px; }
.shal { padding-left: 43px; }
.blank { height: 16px; }
.gr { width: 12px; height: 12px; margin-right: 6px; }
.grow { flex: 1; }
.vs-list { width: 17px; }
.vs-list .vs-thumb { background: linear-gradient(#f0f0f0 0 86%, #cdcdcd 86%); }
.mid-right { flex: 1; display: flex; flex-direction: column; }
.tab { width: 62px; height: 21px; margin-top: 3px; background: #fff; border: 1px solid #ccc; border-bottom: 0; text-align: center; line-height: 20px; font-size: 13px; margin-left: -1px; }
.prop { flex: 1; background: #fff; border: 1px solid #b8b8b8; padding: 3px 0 0 3px; }
.prop-h { height: 20px; background: #f3f3f3; border-left: 1px solid #bbb; display: flex; }
.ph1 { width: 22px; border-right: 1px solid #bbb; }
.ph2 { width: 69px; }
.ph3 { margin-top: 3px; white-space: nowrap; }

.param { flex: 1; min-width: 0; display: flex; flex-direction: column; background: linear-gradient(#bccbdb 0, #d6e2ef 30px, #d9e4f1); margin-left: -2px; border-left: 1px solid #999; padding-left: 7px; }
.param-h { height: 28px; padding-top: 9px; color: #777; flex: none; }
.param-p { width: 827px; flex: 1; margin-bottom: 8px; background: #f0f0f0; border: 1px solid #e0e0e0; border-width: 1px 1px 1px 0; display: flex; flex-direction: column; }
.radios { height: 33px; flex: none; display: flex; align-items: center; padding: 0 0 0 127px; }
.radio { display: flex; align-items: center; gap: 3px; width: 338px; white-space: nowrap; }
.dot { width: 13px; height: 13px; border: 1px solid #333; border-radius: 50%; background: #fff; position: relative; }
.on .dot::after { content: ""; position: absolute; left: 2px; top: 2px; width: 7px; height: 7px; border-radius: 50%; background: #333; }
.canvas { width: 820px; height: 507px; background: #000; }
.param-f { flex: 1; display: flex; justify-content: flex-end; align-items: center; padding-right: 18px; width: 820px; }
.blue-btn { display: block; width: 72px; height: 24px; border: 2px solid #1b6ea8; background: #eee; text-align: center; line-height: 20px; }

/* cad strokes */
.ln { fill: none; vector-effect: non-scaling-stroke; shape-rendering: crispEdges; }
.w { stroke: #fff; stroke-width: 1; }
.r { stroke: #f00; stroke-width: 2; }
.r2 { stroke: #f00; stroke-width: 2; }
.m { stroke: #f0f; stroke-width: 2; }
.c { stroke: #0ff; stroke-width: 2; }
.y { stroke: #ff0; stroke-width: 2; }
.gr1 { stroke: #0f0; stroke-width: 2; }
.cd { stroke: #0ff; stroke-width: 2; }
.yd { stroke: #ff0; stroke-width: 1; }
.gd { stroke: #0f0; stroke-width: 2; }
.cn { fill: #fff; font-family: "Noto Sans CJK SC", sans-serif; }
.gy { fill: #c8c8c8; }
.lt-g { fill: #0f0; font-family: "Liberation Mono", monospace; }
.f-s { fill: #fff; font-family: "Liberation Serif", serif; }
.big1 { font-size: 34px; }
.rn-a { font: 9px "Liberation Serif", serif; fill: #333; }
.rn-b { font: italic bold 11px "Liberation Serif", serif; fill: #2a4fa0; }
.az-a { font: bold 9px "Liberation Sans", sans-serif; fill: #2a4fa0; }
.az-z { font: bold 9px "Liberation Sans", sans-serif; fill: #8a2a20; }

/* status */
.status { height: 21px; flex: none; display: flex; gap: 2px; background: #f0f0f0; border-top: 1px solid #e8e8e8; white-space: nowrap; }
.st { background: #f2f2f2; border: 1px solid #e0e0e0; padding-left: 1px; line-height: 18px; }
.s1 { width: 148px; }
.s2 { width: 78px; }
.s3 { width: 98px; }
.s4 { width: 48px; }
.s5 { width: 914px; }
.s6 { flex: 1; }

/* taskbar */
.taskbar { height: 40px; flex: none; display: flex; background: #01090e; color: #fff; }
.start { width: 48px; display: flex; align-items: center; justify-content: center; flex: none; }
.win { width: 16px; height: 16px; }
.sbox { width: 344px; flex: none; background: #333; display: flex; align-items: center; padding-left: 9px; }
.cortana { width: 19px; height: 19px; border: 2.500px solid #ddd; border-radius: 50%; flex: none; }
.sph { margin-left: 8px; color: #888; font-size: 13px; }
.mic { width: 12px; height: 18px; margin-left: auto; margin-right: 15px; }
.apps { display: flex; flex: none; }
.ap { display: flex; align-items: center; justify-content: center; height: 40px; position: relative; }
.a { width: 50px; }
.b { width: 45px; }
.ai { width: 20px; height: 20px; }
.l { width: 24px; height: 24px; }
.l2 { width: 24px; height: 24px; }
.run::after, .act::after { content: ""; position: absolute; left: 4px; right: 4px; bottom: 0; height: 2px; background: #76b9ed; }
.act { background: #36424a; }
.act::after { left: 0; right: 0; }
.tray { flex: 1; display: flex; align-items: center; font-size: 13px; }
.lk { margin-left: 10px; color: #ccc; font-size: 12px; }
.cpu { width: 50px; margin-left: 21px; display: flex; flex-direction: column; align-items: center; line-height: 18px; font-size: 12px; color: #ddd; white-space: nowrap; }
.trayi { display: flex; margin-left: 12px; }
.ti2 { width: 25px; display: flex; justify-content: center; align-items: center; }
.t16 { width: 16px; height: 16px; }
.t22 { width: 22px; height: 16px; }
.t18 { width: 18px; height: 18px; }
.zh { color: #eee; font-size: 14px; }
.clock { width: 62px; margin-left: 13px; display: flex; flex-direction: column; align-items: center; line-height: 18px; font-size: 12.500px; color: #eee; white-space: nowrap; }
.notif { margin-left: 14px; }

/* overlays */
.badge { position: absolute; left: 701px; top: -25px; width: 44px; height: 44px; border-radius: 50%; background: linear-gradient(#45c05f, #30a94b); border: 2px solid #c8cfc9; box-shadow: 0 2px 4px rgba(0,0,0,.35); color: #fff; text-align: center; font: bold 12px/16px "Liberation Sans", sans-serif; padding-top: 25px; }
.sogou { position: absolute; left: 866px; top: 37px; width: 207px; height: 24px; background: #f6f9fd; border: 1px solid #bcd0e6; display: flex; align-items: center; }
.s-logo { width: 26px; height: 26px; margin-left: -1px; }
.s-zh { width: 15px; margin-left: 8px; font: bold 14px/16px "Noto Sans CJK SC", sans-serif; color: #1e7fd6; }
.s-p { width: 14px; margin-left: 6px; font: bold 13px/14px "Liberation Sans", sans-serif; color: #1e7fd6; }
.s-i { width: 17px; height: 17px; margin-left: 5px; }

.dlg { position: absolute; left: 164px; top: 156px; width: 635px; height: 502px; background: #f0f0f0; border: 1px solid #2d8bd6; box-shadow: 0 0 6px rgba(0,0,0,.35); display: flex; flex-direction: column; }
.dlg-t { height: 30px; background: #fff; display: flex; align-items: center; padding-left: 7px; flex: none; }
.dlg-n { margin-left: 5px; }
.dlg-c { margin-left: auto; display: flex; gap: 33px; padding-right: 17px; }
.db { width: 12px; height: 12px; }
.dlg-b { height: 423px; flex: none; border-top: 2px solid #333; margin: 1px 1px 0 3px; display: flex; justify-content: space-between; }
.cells { padding-top: 4px; display: grid; grid-template-columns: 302px 302px; grid-template-rows: 205px 205px; gap: 5px; }
.cell { background: #000; }
.cell.sel { border: 2px solid #f00; }
.cell.empty { background: transparent; }
.th { width: 100%; height: 100%; }
.vs-dlg { width: 14px; }
.vs-dlg .vs-thumb { background: linear-gradient(#f0f0f0 0 50%, #cdcdcd 50% 97%, #f0f0f0 97%); }
.dlg-f { flex: 1; border-top: 1px solid #ddd; display: flex; justify-content: flex-end; align-items: center; gap: 15px; padding-right: 33px; padding-bottom: 2px; }
.ok { width: 89px; height: 25px; line-height: 21px; }
.cancel { width: 89px; height: 25px; border: 1px solid #aaa; background: #e6e6e6; text-align: center; line-height: 23px; }

.annot { position: absolute; left: 416px; top: 138px; width: 374px; height: 272px; border: 8px solid #f00; border-left-width: 7px; }
```
